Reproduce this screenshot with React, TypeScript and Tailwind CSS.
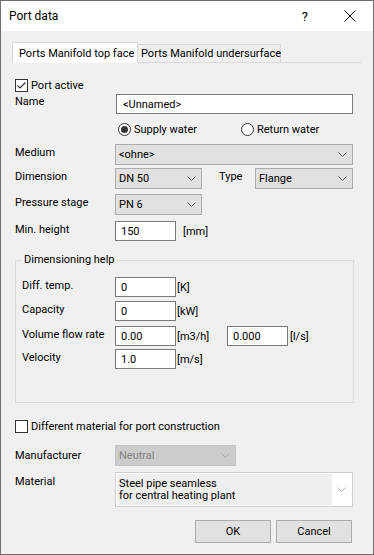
import React from "react";

const Chevron = ({ c = "#5a5a5a" }: { c?: string }) => (
  <svg width="9" height="5" viewBox="0 0 9 5" className="shrink-0">
    <path d="M0.5 0.5 L4.5 4.5 L8.5 0.5" fill="none" stroke={c} strokeWidth="1" />
  </svg>
);

const Combo = ({ text, w, disabled }: { text: string; w: string; disabled?: boolean }) => (
  <div
    className={`flex items-center justify-between h-[21px] pl-[3px] pr-[5px] border ${
      disabled ? "border-[#c4c4c4] bg-[#cccccc] text-[#838383]" : "border-[#adadad] bg-[#e1e1e1]"
    } ${w}`}
  >
    <span>{text}</span>
    <Chevron c={disabled ? "#a8a8a8" : "#5a5a5a"} />
  </div>
);

const Input = ({ text, w }: { text: string; w: string }) => (
  <div className={`flex items-center h-[20px] pl-[5px] border border-[#7a7a7a] bg-white ${w}`}>
    <span>{text}</span>
  </div>
);

const CheckBox = ({ checked }: { checked?: boolean }) => (
  <div className="w-[13px] h-[13px] border border-[#333333] bg-white flex items-center justify-center shrink-0">
    {checked && (
      <svg width="11" height="11" viewBox="0 0 11 11">
        <path d="M1.5 5.5 L4 8 L9.5 2.5" fill="none" stroke="#333333" strokeWidth="1.2" />
      </svg>
    )}
  </div>
);

const Radio = ({ checked }: { checked?: boolean }) => (
  <div className="w-[13px] h-[13px] rounded-full border border-[#333333] bg-white flex items-center justify-center shrink-0">
    {checked && <div className="w-[7px] h-[7px] rounded-full bg-[#333333]" />}
  </div>
);

export default function App() {
  return (
    <div className="w-[374px] h-[555px] border border-[#6f6f6f] bg-[#f0f0f0] flex flex-col font-['Roboto',sans-serif] text-[11px] leading-none text-black overflow-hidden whitespace-nowrap">
      {/* Title bar */}
      <div className="h-[30px] bg-white flex items-center shrink-0">
        <span className="ml-[8px] text-[12px]">Port data</span>
        <span className="ml-auto mr-[36px] text-[13px]">?</span>
        <svg width="12" height="12" viewBox="0 0 12 12" className="mr-[17px]">
          <path d="M0.5 0.5 L11.5 11.5 M11.5 0.5 L0.5 11.5" stroke="#000" strokeWidth="1" />
        </svg>
      </div>

      {/* Tabs */}
      <div className="mt-[11px] ml-[11px] mr-[12px] flex items-end border-b border-[#d9d9d9] h-[21px]">
        <div className="h-[21px] -mb-px bg-white border border-b-0 border-[#d9d9d9] flex items-center pl-[6px] w-[126px] z-10">
          Ports Manifold top face
        </div>
        <div className="h-[18px] border border-b-0 border-l-0 border-[#d9d9d9] flex items-center pl-[3px] w-[143px]">
          Ports Manifold undersurface
        </div>
      </div>

      {/* Content */}
      <div className="flex flex-col pl-[13px] pr-[20px]">
        <div className="mt-[16px] flex items-center h-[13px] ml-[1px]">
          <CheckBox checked />
          <span className="ml-[3px]">Port active</span>
        </div>

        <div className="mt-[2px] flex items-center h-[20px]">
          <span className="w-[102px] pl-[1px] mb-[5px]">Name</span>
          <div className="flex items-center h-[20px] pl-[6px] border border-[#7a7a7a] bg-white w-[237px]">
            &lt;Unnamed&gt;
          </div>
        </div>

        <div className="mt-[9px] flex items-center h-[13px] pl-[104px]">
          <Radio checked />
          <span className="ml-[3px] w-[107px]">Supply water</span>
          <Radio />
          <span className="ml-[3px]">Return water</span>
        </div>

        <div className="mt-[8px] flex items-center">
          <span className="w-[101px] pl-[1px] mb-[4px]">Medium</span>
          <Combo text="<ohne>" w="w-[238px]" />
        </div>

        <div className="mt-[3px] flex items-center">
          <span className="w-[101px] pl-[1px] mb-[4px]">Dimension</span>
          <Combo text="DN 50" w="w-[87px]" />
          <span className="ml-[17px] w-[36px] mb-[4px]">Type</span>
          <Combo text="Flange" w="w-[98px]" />
        </div>

        <div className="mt-[5px] flex items-center">
          <span className="w-[101px] pl-[1px] mb-[4px]">Pressure stage</span>
          <Combo text="PN 6" w="w-[87px]" />
        </div>

        <div className="mt-[6px] flex items-center">
          <span className="w-[101px] pl-[1px] mb-[4px]">Min. height</span>
          <Input text="150" w="w-[61px]" />
          <span className="ml-[7px]">[mm]</span>
        </div>

        {/* Group box */}
        <div className="relative mt-[19px] ml-[1px] w-[339px] h-[143px] border border-[#dcdcdc] flex flex-col pl-[6px]">
          <span className="absolute -top-[7px] left-[6px] px-[2px] bg-[#f0f0f0]">Dimensioning help</span>
          <div className="mt-[16px] flex items-center">
            <span className="w-[93px] mb-[4px]">Diff. temp.</span>
            <Input text="0" w="w-[61px]" />
            <span className="ml-[1px]">[K]</span>
          </div>
          <div className="mt-[4px] flex items-center">
            <span className="w-[93px] mb-[4px]">Capacity</span>
            <Input text="0" w="w-[61px]" />
            <span className="ml-[1px]">[kW]</span>
          </div>
          <div className="mt-[5px] flex items-center">
            <span className="w-[93px] mb-[4px]">Volume flow rate</span>
            <Input text="0.00" w="w-[61px]" />
            <span className="ml-[1px] w-[50px]">[m3/h]</span>
            <Input text="0.000" w="w-[61px]" />
            <span className="ml-[2px]">[l/s]</span>
          </div>
          <div className="mt-[3px] flex items-center">
            <span className="w-[93px] mb-[4px]">Velocity</span>
            <Input text="1.0" w="w-[61px]" />
            <span className="ml-[1px]">[m/s]</span>
          </div>
        </div>

        <div className="mt-[17px] flex items-center h-[13px] ml-[1px]">
          <CheckBox />
          <span className="ml-[3px]">Different material for port construction</span>
        </div>

        <div className="mt-[12px] flex items-center">
          <span className="w-[101px] pl-[1px]">Manufacturer</span>
          <Combo text="Neutral" w="w-[121px]" disabled />
        </div>

        <div className="mt-[6px] flex items-start">
          <span className="w-[101px] pl-[1px] mt-[4px]">Material</span>
          <div className="w-[238px] h-[35px] border border-[#cfcfcf] bg-white flex p-px">
            <div className="flex-1 bg-[#efefef] flex flex-col justify-center pl-[2px] leading-[12px]">
              <span>Steel pipe seamless</span>
              <span>for central heating plant</span>
            </div>
            <div className="w-[19px] flex items-center justify-center">
              <Chevron c="#b0b0b0" />
            </div>
          </div>
        </div>

        <div className="mt-[13px] flex justify-end gap-[5px] pr-[1px]">
          <div className="w-[76px] h-[23px] border border-[#adadad] bg-[#e1e1e1] flex items-center justify-center">
            OK
          </div>
          <div className="w-[76px] h-[23px] border border-[#adadad] bg-[#e1e1e1] flex items-center justify-center">
            Cancel
          </div>
        </div>
      </div>
    </div>
  );
}
